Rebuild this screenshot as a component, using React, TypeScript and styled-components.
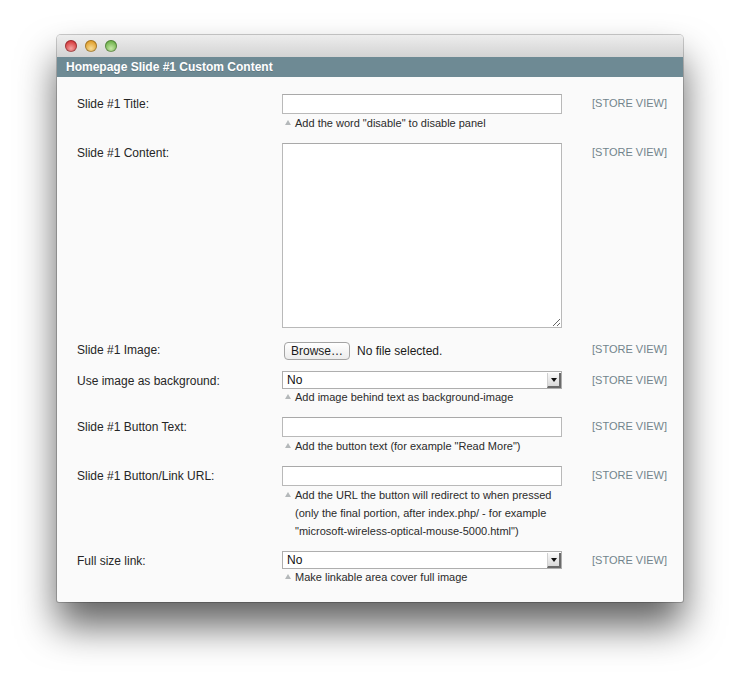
import React from "react";
import styled, { createGlobalStyle } from "styled-components";

const Global = createGlobalStyle`
  html, body { margin: 0; padding: 0; background: #ffffff; }
  body { font-family: "Liberation Sans", Arial, Helvetica, sans-serif; }
  * { box-sizing: border-box; }
`;

const Page = styled.div`
  padding: 35px 0 80px 57px;
`;

const Window = styled.div`
  width: 626px;
  background: #fafafa;
  border-radius: 4px 4px 2px 2px;
  box-shadow: 0 24px 38px rgba(0, 0, 0, 0.62), 0 0 0 1px rgba(0, 0, 0, 0.2);
  overflow: hidden;
`;

const TitleBar = styled.div`
  height: 22px;
  display: flex;
  align-items: center;
  gap: 8px;
  padding-left: 8px;
  background: linear-gradient(#ededed, #d3d3d3);
`;

const lightColors: Record<string, [string, string]> = {
  red: ["#f4a2a0", "#d5393c"],
  yellow: ["#f7dc95", "#e09e2a"],
  green: ["#c6e8a6", "#6db14a"],
};

const Light = styled.span<{ $c: "red" | "yellow" | "green" }>`
  width: 12px;
  height: 12px;
  border-radius: 50%;
  background: radial-gradient(
    circle at 50% 70%,
    ${(p) => lightColors[p.$c][0]} 0%,
    ${(p) => lightColors[p.$c][1]} 70%
  );
  box-shadow: inset 0 0 0 1px rgba(0, 0, 0, 0.28);
`;

const Header = styled.div`
  height: 20px;
  background: #6e8a94;
  color: #ffffff;
  font-weight: bold;
  font-size: 12px;
  line-height: 20px;
  padding-left: 9px;
  text-shadow: 0 1px 0 rgba(0, 0, 0, 0.15);
`;

const Body = styled.div`
  display: flex;
  flex-direction: column;
  gap: 11px;
  padding: 17px 0 16px 20px;
`;

const Row = styled.div`
  display: grid;
  grid-template-columns: 205px 280px 1fr;
  align-items: start;
`;

const Label = styled.div`
  font-size: 12px;
  line-height: 20px;
  color: #262626;
`;

const Value = styled.div`
  display: flex;
  flex-direction: column;
`;

const Scope = styled.div`
  padding-left: 30px;
  font-size: 11px;
  line-height: 18px;
  color: #72848c;
  white-space: nowrap;
`;

const TextInput = styled.div`
  height: 20px;
  background: #ffffff;
  border: 1px solid #b9b9b9;
  border-top-color: #a9a9a9;
`;

const TextArea = styled.textarea`
  display: block;
  width: 280px;
  height: 185px;
  margin: 0 0 1px 0;
  background: #ffffff;
  border: 1px solid #b9b9b9;
  border-top-color: #a9a9a9;
  border-radius: 0;
  resize: vertical;
  outline: none;
  font-family: inherit;
`;

const Select = styled.div`
  height: 18px;
  margin-bottom: -1px;
  display: flex;
  align-items: stretch;
  background: #ffffff;
  border: 1px solid #aeaeae;
`;

const SelectText = styled.span`
  flex: 1;
  padding-left: 4px;
  font-size: 12px;
  line-height: 16px;
  color: #111111;
`;

const SelectArrow = styled.span`
  width: 14px;
  margin: 1px 0 0 0;
  display: flex;
  align-items: center;
  justify-content: center;
  background: linear-gradient(#fafafa, #d9d9d9);
  border-left: 1px solid #d0d0d0;
  border-right: 2px solid #6a6a6a;
  border-bottom: 2px solid #6a6a6a;
  &::after {
    content: "";
    border-left: 3px solid transparent;
    border-right: 3px solid transparent;
    border-top: 4px solid #111111;
    margin-top: 1px;
  }
`;

const Note = styled.div`
  position: relative;
  padding-left: 13px;
  font-size: 11px;
  line-height: 18px;
  color: #2b2b2b;
  &::before {
    content: "";
    position: absolute;
    left: 3px;
    top: 6px;
    border-left: 3px solid transparent;
    border-right: 3px solid transparent;
    border-bottom: 5px solid #b4b8ba;
  }
`;

const FileRow = styled.div`
  height: 20px;
  display: flex;
  align-items: center;
  gap: 7px;
  padding-left: 2px;
`;

const BrowseButton = styled.span`
  width: 66px;
  height: 18px;
  display: flex;
  align-items: center;
  justify-content: center;
  border: 1px solid #a4a4a4;
  border-radius: 4px;
  background: linear-gradient(#ffffff, #ececec);
  font-size: 12px;
  color: #1a1a1a;
  margin-top: 2px;
`;

const FileText = styled.span`
  font-size: 12px;
  color: #1a1a1a;
  margin-top: 2px;
`;

type Field =
  | { kind: "text"; label: string; note?: string[] }
  | { kind: "area"; label: string }
  | { kind: "file"; label: string }
  | { kind: "select"; label: string; value: string; note?: string[] };

const fields: Field[] = [
  { kind: "text", label: "Slide #1 Title:", note: ['Add the word "disable" to disable panel'] },
  { kind: "area", label: "Slide #1 Content:" },
  { kind: "file", label: "Slide #1 Image:" },
  {
    kind: "select",
    label: "Use image as background:",
    value: "No",
    note: ["Add image behind text as background-image"],
  },
  {
    kind: "text",
    label: "Slide #1 Button Text:",
    note: ['Add the button text (for example "Read More")'],
  },
  {
    kind: "text",
    label: "Slide #1 Button/Link URL:",
    note: [
      "Add the URL the button will redirect to when pressed",
      "(only the final portion, after index.php/ - for example",
      '"microsoft-wireless-optical-mouse-5000.html")',
    ],
  },
  {
    kind: "select",
    label: "Full size link:",
    value: "No",
    note: ["Make linkable area cover full image"],
  },
];

function Control({ f }: { f: Field }) {
  switch (f.kind) {
    case "text":
      return <TextInput />;
    case "area":
      return <TextArea />;
    case "file":
      return (
        <FileRow>
          <BrowseButton>Browse…</BrowseButton>
          <FileText>No file selected.</FileText>
        </FileRow>
      );
    case "select":
      return (
        <Select>
          <SelectText>{f.value}</SelectText>
          <SelectArrow />
        </Select>
      );
  }
}

export default function App() {
  return (
    <Page>
      <Global />
      <Window>
        <TitleBar>
          <Light $c="red" />
          <Light $c="yellow" />
          <Light $c="green" />
        </TitleBar>
        <Header>Homepage Slide #1 Custom Content</Header>
        <Body>
          {fields.map((f, i) => (
            <Row key={i}>
              <Label>{f.label}</Label>
              <Value>
                <Control f={f} />
                {"note" in f && f.note && (
                  <Note>
                    {f.note.map((line, j) => (
                      <div key={j}>{line}</div>
                    ))}
                  </Note>
                )}
              </Value>
              <Scope>[STORE VIEW]</Scope>
            </Row>
          ))}
        </Body>
      </Window>
    </Page>
  );
}
